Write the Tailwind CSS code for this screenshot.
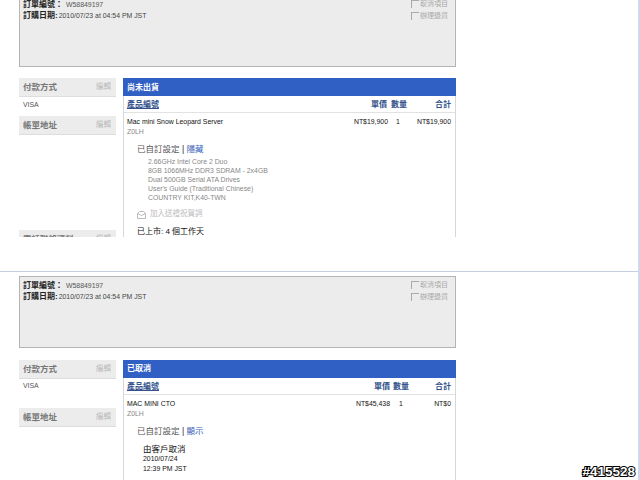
<!DOCTYPE html>
<html lang="zh-Hant">
<head>
<meta charset="UTF-8">
<title>訂單</title>
<script src="https://cdn.jsdelivr.net/npm/@tailwindcss/browser@4"></script>
</head>
<body class="bg-white w-[640px] h-[480px] overflow-hidden relative font-['Liberation_Sans','Noto_Sans_CJK_TC',sans-serif] text-[6.9px] leading-[10px] text-[#333]">
  <div class="absolute top-0 bottom-0 right-0 w-[2px] bg-[#cfd9ee]"></div>

  <!-- first order -->
  <section class="h-[237px] overflow-hidden pl-[19px]">
    <div class="w-[437px] h-[72px] -mt-[5px] bg-[#ececec] border border-[#b4b4b4] pt-[3px] pl-[3px] pr-[7px] flex justify-between">
      <div>
        <p class="h-[11px] flex items-center gap-[3px]"><b class="text-[8px] text-[#222]">訂單編號：</b><span class="text-[#555]">W58849197</span></p>
        <p class="h-[11px] flex items-center gap-[1px]"><b class="text-[8px] text-[#222]">訂購日期:</b><span class="text-[#444]">2010/07/23 at 04:54 PM JST</span></p>
      </div>
      <div class="text-[7px] text-[#aaa] -mt-[1px]">
        <p class="h-[12px] flex items-center gap-[1px]"><i class="w-[8px] h-[8px] border-t border-l border-[#aaa]"></i>取消項目</p>
        <p class="h-[12px] flex items-center gap-[1px]"><i class="w-[8px] h-[8px] border-t border-l border-[#aaa]"></i>辦理退貨</p>
      </div>
    </div>
    <div class="flex gap-[7px] mt-[11px]">
      <aside class="w-[97px]">
        <div class="h-[19px] bg-[#ececec] border-b border-[#ddd] flex items-center justify-between pl-[4px] pr-[5px]"><span class="text-[8.5px] font-bold text-[#777]">付款方式</span><span class="text-[#bbb] text-[7.5px]">編輯</span></div>
        <p class="h-[19px] pl-[4px] pt-[3px] text-[#555]">VISA</p>
        <div class="h-[19px] bg-[#ececec] border-b border-[#ddd] flex items-center justify-between pl-[4px] pr-[5px]"><span class="text-[8.5px] font-bold text-[#777]">帳單地址</span><span class="text-[#bbb] text-[7.5px]">編輯</span></div>
        <div class="h-[95px]"></div>
        <div class="h-[19px] bg-[#ececec] border-b border-[#ddd] flex items-center justify-between pl-[4px] pr-[5px]"><span class="text-[8.5px] font-bold text-[#777]">電話聯絡資料</span><span class="text-[#bbb] text-[7.5px]">編輯</span></div>
      </aside>
      <div class="w-[333px] h-[160px] border-x border-[#d4d8de]">
        <div class="h-[18px] -mx-px bg-[#3060c4] text-white text-[8px] font-bold flex items-center pl-[4px] pt-[1px]">尚未出貨</div>
        <div class="h-[17px] border-b border-[#e2e2e2] flex items-center text-[#33528c] text-[8px] font-bold pl-[3px] pr-[4px] pt-[1px] whitespace-nowrap">
          <span class="underline">產品編號</span>
          <span class="ml-auto">單價</span><span class="ml-[4px] w-[15px]">數量</span><span class="w-[45px] text-right">合計</span>
        </div>
        <div class="flex pl-[3px] pr-[4px] pt-[4px] text-[#111] whitespace-nowrap">
          <div>
            <p class="h-[10px]">Mac mini Snow Leopard Server</p>
            <p class="h-[9px] text-[#888]">Z0LH</p>
          </div>
          <span class="ml-auto">NT$19,900</span><span class="w-[20px] text-center">1</span><span class="w-[43px] text-right">NT$19,900</span>
        </div>
        <p class="ml-[13px] mt-[8px] h-[10px] text-[8.5px] text-[#555]">已自訂設定 <span class="text-[#222]">|</span> <span class="text-[#3a62b8]">隱藏</span></p>
        <ul class="ml-[24px] mt-[3px] text-[#888] leading-[9px]">
          <li>2.66GHz Intel Core 2 Duo</li>
          <li>8GB 1066MHz DDR3 SDRAM - 2x4GB</li>
          <li>Dual 500GB Serial ATA Drives</li>
          <li>User's Guide (Traditional Chinese)</li>
          <li>COUNTRY KIT,K40-TWN</li>
        </ul>
        <p class="ml-[13px] mt-[6px] h-[12px] flex items-center gap-[4px] text-[7.5px] text-[#bbb]">
          <svg width="9" height="9" viewBox="0 0 9 9" fill="none" stroke="#aaa" stroke-width="0.8"><path d="M.5 3.5 2.5 1.5h4l2 2v5h-8zM.5 3.5l4 2 4-2"/></svg>加入送禮祝賀詞
        </p>
        <p class="ml-[13px] mt-[7px] text-[8px] text-[#111]">已上市: 4 個工作天</p>
      </div>
    </div>
  </section>

  <div class="h-[35px] border-b border-[#c4cfdf]"></div>

  <!-- second order -->
  <section class="pl-[19px] pt-[4px]">
    <div class="w-[437px] h-[72px] bg-[#ececec] border border-[#b4b4b4] pt-[3px] pl-[3px] pr-[7px] flex justify-between">
      <div>
        <p class="h-[11px] flex items-center gap-[3px]"><b class="text-[8px] text-[#222]">訂單編號：</b><span class="text-[#555]">W58849197</span></p>
        <p class="h-[11px] flex items-center gap-[1px]"><b class="text-[8px] text-[#222]">訂購日期:</b><span class="text-[#444]">2010/07/23 at 04:54 PM JST</span></p>
      </div>
      <div class="text-[7px] text-[#aaa] -mt-[1px]">
        <p class="h-[12px] flex items-center gap-[1px]"><i class="w-[8px] h-[8px] border-t border-l border-[#aaa]"></i>取消項目</p>
        <p class="h-[12px] flex items-center gap-[1px]"><i class="w-[8px] h-[8px] border-t border-l border-[#aaa]"></i>辦理退貨</p>
      </div>
    </div>
    <div class="flex gap-[7px] mt-[12px]">
      <aside class="w-[97px]">
        <div class="h-[19px] bg-[#ececec] border-b border-[#ddd] flex items-center justify-between pl-[4px] pr-[5px]"><span class="text-[8.5px] font-bold text-[#777]">付款方式</span><span class="text-[#bbb] text-[7.5px]">編輯</span></div>
        <p class="h-[29px] pl-[4px] pt-[2px] text-[#555]">VISA</p>
        <div class="h-[19px] bg-[#ececec] border-b border-[#ddd] flex items-center justify-between pl-[4px] pr-[5px]"><span class="text-[8.5px] font-bold text-[#777]">帳單地址</span><span class="text-[#bbb] text-[7.5px]">編輯</span></div>
      </aside>
      <div class="w-[333px] h-[120px] border-x border-[#d4d8de]">
        <div class="h-[18px] -mx-px bg-[#3060c4] text-white text-[8px] font-bold flex items-center pl-[4px]">已取消</div>
        <div class="h-[17px] border-b border-[#e2e2e2] flex items-center text-[#33528c] text-[8px] font-bold pl-[3px] pr-[4px] pt-[1px] whitespace-nowrap">
          <span class="underline">產品編號</span>
          <span class="ml-auto">單價</span><span class="ml-[3px] w-[16px]">數量</span><span class="w-[42px] text-right">合計</span>
        </div>
        <div class="flex pl-[3px] pr-[4px] pt-[4px] text-[#111] whitespace-nowrap">
          <div>
            <p class="h-[10px]">MAC MINI CTO</p>
            <p class="h-[9px] text-[#888]">Z0LH</p>
          </div>
          <span class="ml-auto">NT$45,438</span><span class="w-[22px] text-center">1</span><span class="w-[39px] text-right">NT$0</span>
        </div>
        <p class="ml-[13px] mt-[8px] h-[10px] text-[8.5px] text-[#555]">已自訂設定 <span class="text-[#222]">|</span> <span class="text-[#3a62b8]">顯示</span></p>
        <div class="ml-[19px] mt-[8px] text-[#111]">
          <p class="text-[8.5px] h-[10px]">由客戶取消</p>
          <p class="h-[10px]">2010/07/24</p>
          <p class="h-[10px]">12:39 PM JST</p>
        </div>
      </div>
    </div>
  </section>

  <span class="absolute right-[5px] bottom-[2px] text-[13.5px] leading-[13px] font-bold text-white [-webkit-text-stroke:2px_black] [paint-order:stroke_fill]">#415528</span>
</body>
</html>
